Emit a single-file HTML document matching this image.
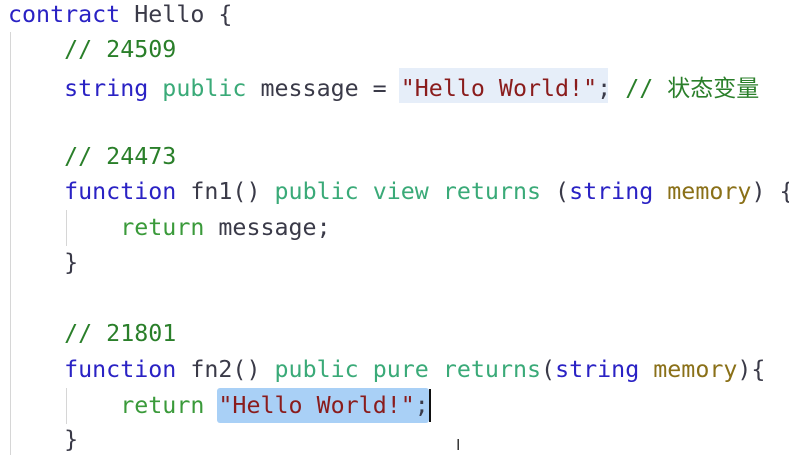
<!DOCTYPE html>
<html><head><style>
body{margin:0;width:789px;height:455px;background:#fff;overflow:hidden;position:relative;font-family:"DejaVu Sans Mono","Liberation Mono","Noto Sans CJK SC",monospace;font-size:23.3px;color:#3a3a48}
.l{position:absolute;left:8px;white-space:pre;line-height:34px;height:34px}
.k{color:#2a22c4}.c{color:#2a7f2a}.p{color:#3aaa78}.r{color:#3a9a3a}.s{color:#8a1c1c}.m{color:#8a7018}
.cj{font-family:"Noto Sans CJK SC",sans-serif;font-size:23px}
.g{position:absolute;width:1px;background:#d6d6d6}
.h{position:absolute}
</style></head><body>
<div class="g" style="left:10px;top:32px;height:423px"></div>
<div class="g" style="left:66px;top:210px;height:36px"></div>
<div class="g" style="left:66px;top:388px;height:36px"></div>
<div class="h" style="left:399px;top:68px;width:209px;height:35px;background:#e6eef9"></div>
<div class="h" style="left:217px;top:388px;width:212px;height:35px;background:#a9d0f6;border-radius:3px"></div>
<div class="h" style="left:429px;top:389px;width:2px;height:33px;background:#111"></div>
<div class="l" style="top:-2px"><span class="k">contract</span> Hello {</div>
<div class="l" style="top:33px">    <span class="c">// 24509</span></div>
<div class="l" style="top:69px">    <span class="k">string</span> <span class="p">public</span> message = <span class="s">"Hello World!"</span>; <span class="c">// <span class="cj">状态变量</span></span></div>
<div class="l" style="top:140px">    <span class="c">// 24473</span></div>
<div class="l" style="top:175px">    <span class="k">function</span> fn1() <span class="p">public</span> <span class="p">view</span> <span class="p">returns</span> (<span class="k">string</span> <span class="m">memory</span>) {</div>
<div class="l" style="top:211px">        <span class="r">return</span> message;</div>
<div class="l" style="top:246px">    }</div>
<div class="l" style="top:317px">    <span class="c">// 21801</span></div>
<div class="l" style="top:353px">    <span class="k">function</span> fn2() <span class="p">public</span> <span class="p">pure</span> <span class="p">returns</span>(<span class="k">string</span> <span class="m">memory</span>){</div>
<div class="l" style="top:389px">        <span class="r">return</span> <span class="s">"Hello World!"</span>;</div>
<div class="l" style="top:423px">    }</div>
<div style="position:absolute;left:456px;top:437px;font-size:16px;color:#333;font-family:'Liberation Sans',sans-serif">I</div>
</body></html>
